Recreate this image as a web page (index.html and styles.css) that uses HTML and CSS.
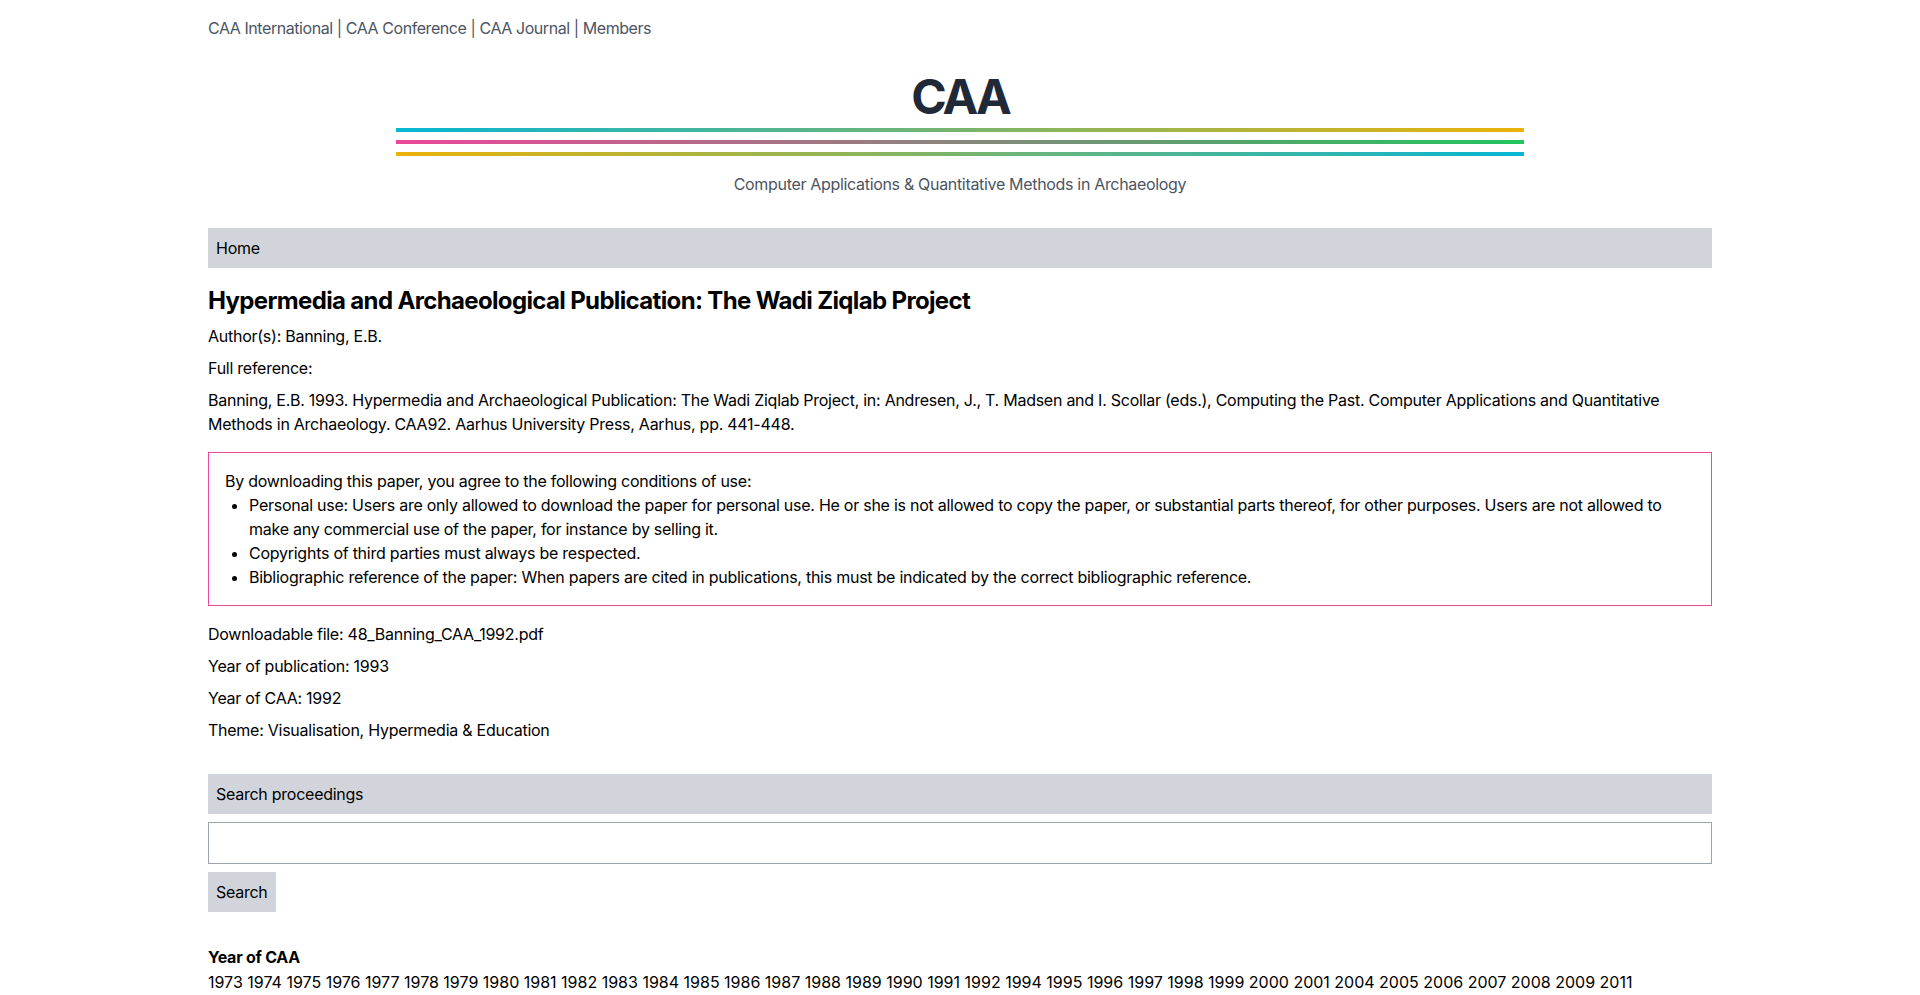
FILE: index.html
```html
<!DOCTYPE html>
<html lang="en">
<head>
<meta charset="utf-8">
<title>Hypermedia and Archaeological Publication: The Wadi Ziqlab Project - CAA</title>
<link rel="stylesheet" href="styles.css">
</head>
<body>
<div class="container">
  <header class="site-header">
    <nav class="top-nav">
      <a href="#">CAA International</a> | <a href="#">CAA Conference</a> | <a href="#">CAA Journal</a> | <a href="#">Members</a>
    </nav>
    <h1 class="brand">CAA</h1>
    <div class="stripes">
      <div class="stripe stripe-1"></div>
      <div class="stripe stripe-2"></div>
      <div class="stripe stripe-3"></div>
    </div>
    <p class="tagline">Computer Applications &amp; Quantitative Methods in Archaeology</p>
  </header>

  <div class="bar"><a href="#">Home</a></div>

  <main class="paper">
    <h2 class="paper-title">Hypermedia and Archaeological Publication: The Wadi Ziqlab Project</h2>
    <p>Author(s): Banning, E.B.</p>
    <p>Full reference:</p>
    <p>Banning, E.B. 1993. Hypermedia and Archaeological Publication: The Wadi Ziqlab Project, in: Andresen, J., T. Madsen and I. Scollar (eds.), Computing the Past. Computer Applications and Quantitative Methods in Archaeology. CAA92. Aarhus University Press, Aarhus, pp. 441-448.</p>

    <div class="conditions">
      <p class="conditions-intro">By downloading this paper, you agree to the following conditions of use:</p>
      <ul>
        <li>Personal use: Users are only allowed to download the paper for personal use. He or she is not allowed to copy the paper, or substantial parts thereof, for other purposes. Users are not allowed to make any commercial use of the paper, for instance by selling it.</li>
        <li>Copyrights of third parties must always be respected.</li>
        <li>Bibliographic reference of the paper: When papers are cited in publications, this must be indicated by the correct bibliographic reference.</li>
      </ul>
    </div>

    <p>Downloadable file: <a href="#">48_Banning_CAA_1992.pdf</a></p>
    <p>Year of publication: 1993</p>
    <p>Year of CAA: 1992</p>
    <p>Theme: Visualisation, Hypermedia &amp; Education</p>
  </main>

  <section class="search">
    <div class="bar">Search proceedings</div>
    <form class="search-form" onsubmit="return false;">
      <input class="search-input" type="text" aria-label="Search proceedings">
      <button class="search-button" type="submit">Search</button>
    </form>
  </section>

  <section class="years">
    <h3 class="years-title">Year of CAA</h3>
    <div class="years-list">
      <a href="#">1973</a> <a href="#">1974</a> <a href="#">1975</a> <a href="#">1976</a> <a href="#">1977</a> <a href="#">1978</a> <a href="#">1979</a> <a href="#">1980</a> <a href="#">1981</a> <a href="#">1982</a> <a href="#">1983</a> <a href="#">1984</a> <a href="#">1985</a> <a href="#">1986</a> <a href="#">1987</a> <a href="#">1988</a> <a href="#">1989</a> <a href="#">1990</a> <a href="#">1991</a> <a href="#">1992</a> <a href="#">1994</a> <a href="#">1995</a> <a href="#">1996</a> <a href="#">1997</a> <a href="#">1998</a> <a href="#">1999</a> <a href="#">2000</a> <a href="#">2001</a> <a href="#">2004</a> <a href="#">2005</a> <a href="#">2006</a> <a href="#">2007</a> <a href="#">2008</a> <a href="#">2009</a> <a href="#">2011</a>
    </div>
  </section>
</div>
</body>
</html>
```

FILE: styles.css
```css
* {
  box-sizing: border-box;
}

html, body {
  margin: 0;
  padding: 0;
  background: #ffffff;
}

body {
  font-family: Inter, "Noto Sans", "Liberation Sans", sans-serif;
  font-size: 16px;
  line-height: 24px;
  color: #000000;
  letter-spacing: -0.016em;
}

a {
  color: inherit;
  text-decoration: none;
}

p, h1, h2, h3, ul {
  margin: 0;
}

.container {
  max-width: 1536px;
  margin: 0 auto;
  padding: 0 16px 40px;
}

/* Header */
.site-header {
  display: flex;
  flex-direction: column;
  align-items: center;
  padding-top: 16px;
}

.top-nav {
  align-self: stretch;
  color: #4b5563;
  letter-spacing: -0.027em;
}

.brand {
  margin-top: 33px;
  font-size: 48px;
  line-height: 48px;
  font-weight: 700;
  color: #1f2937;
  letter-spacing: -3px;
}

.stripes {
  width: 75%;
  margin-top: 7px;
  display: flex;
  flex-direction: column;
  gap: 8px;
}

.stripe {
  height: 4px;
}

.stripe-1 {
  background: linear-gradient(to right, #06b6d4, #eab308);
}

.stripe-2 {
  background: linear-gradient(to right, #ec4899, #22c55e);
}

.stripe-3 {
  background: linear-gradient(to right, #eab308, #06b6d4);
}

.tagline {
  margin-top: 16px;
  color: #4b5563;
  letter-spacing: -0.02em;
}

/* Grey bars */
.bar {
  background: #d1d5db;
  padding: 8px;
}

.site-header + .bar {
  margin-top: 32px;
}

/* Paper */
.paper-title {
  margin-top: 17px;
  margin-bottom: 7px;
  font-size: 24px;
  line-height: 32px;
  font-weight: 700;
  letter-spacing: -0.027em;
}

.paper p {
  margin-bottom: 8px;
}

.conditions {
  margin: 16px 0;
  border: 1px solid #ec4899;
  padding: 16px;
}

.paper .conditions-intro {
  margin: 0;
}

.conditions ul {
  padding-left: 24px;
  list-style: disc;
}

/* Search */
.search {
  margin-top: 32px;
}

.search-form {
  display: flex;
  flex-direction: column;
  align-items: flex-start;
}

.search-input {
  width: 100%;
  margin-top: 8px;
  height: 42px;
  border: 1px solid #9ca3af;
  padding: 8px;
  font: inherit;
  background: #ffffff;
  border-radius: 0;
  outline: none;
}

.search-button {
  margin-top: 8px;
  background: #d1d5db;
  border: none;
  padding: 8px;
  font: inherit;
  letter-spacing: -0.016em;
  color: #000000;
  cursor: pointer;
  border-radius: 0;
}

/* Years */
.years {
  margin-top: 33px;
}

.years-title {
  font-size: 16px;
  line-height: 25px;
  font-weight: 700;
}

.years-list {
  letter-spacing: 0;
}
```
